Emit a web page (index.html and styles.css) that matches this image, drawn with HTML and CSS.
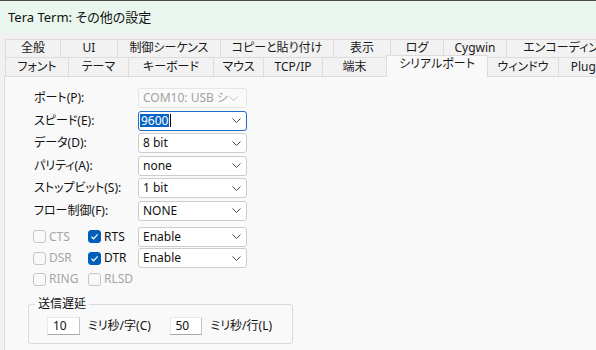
FILE: index.html
```html
<!DOCTYPE html>
<html lang="ja">
<head>
<meta charset="utf-8">
<title>Tera Term: その他の設定</title>
<link rel="stylesheet" href="styles.css">
</head>
<body>
<div class="window">
  <div class="titlebar">Tera Term: その他の設定</div>
  <div class="dialog">
    <div class="tabs">
      <div class="tab-row">
        <div class="tab w55">全般</div>
        <div class="tab w57">UI</div>
        <div class="tab w103">制御シーケンス</div>
        <div class="tab w113">コピーと貼り付け</div>
        <div class="tab w57">表示</div>
        <div class="tab w53">ログ</div>
        <div class="tab w63">Cygwin</div>
        <div class="tab w120">エンコーディング</div>
      </div>
      <div class="tab-row row2">
        <div class="tab w63">フォント</div>
        <div class="tab w60">テーマ</div>
        <div class="tab w85">キーボード</div>
        <div class="tab w50">マウス</div>
        <div class="tab w59">TCP/IP</div>
        <div class="tab w64">端末</div>
        <div class="tab w102 selected">シリアルポート</div>
        <div class="tab w70">ウィンドウ</div>
        <div class="tab w60">Plugin</div>
      </div>
    </div>
    <div class="panel">
      <div class="form">
        <label class="lbl">ポート(P):</label>
        <div class="combo disabled"><span class="val clip">COM10: USB シリアル デバイス</span><svg class="chev" width="9" height="5" viewBox="0 0 9 5"><polyline points="0.5,0.5 4.5,4.5 8.5,0.5" fill="none" stroke="#c4c4c4" stroke-width="1"/></svg></div>

        <label class="lbl">スピード(E):</label>
        <div class="combo focus"><span class="val"><span class="sel">9600</span><span class="caret"></span></span><svg class="chev" width="9" height="5" viewBox="0 0 9 5"><polyline points="0.5,0.5 4.5,4.5 8.5,0.5" fill="none" stroke="#444" stroke-width="1"/></svg></div>

        <label class="lbl">データ(D):</label>
        <div class="combo"><span class="val">8 bit</span><svg class="chev" width="9" height="5" viewBox="0 0 9 5"><polyline points="0.5,0.5 4.5,4.5 8.5,0.5" fill="none" stroke="#444" stroke-width="1"/></svg></div>

        <label class="lbl">パリティ(A):</label>
        <div class="combo"><span class="val">none</span><svg class="chev" width="9" height="5" viewBox="0 0 9 5"><polyline points="0.5,0.5 4.5,4.5 8.5,0.5" fill="none" stroke="#444" stroke-width="1"/></svg></div>

        <label class="lbl">ストップビット(S):</label>
        <div class="combo"><span class="val">1 bit</span><svg class="chev" width="9" height="5" viewBox="0 0 9 5"><polyline points="0.5,0.5 4.5,4.5 8.5,0.5" fill="none" stroke="#444" stroke-width="1"/></svg></div>

        <label class="lbl">フロー制御(F):</label>
        <div class="combo"><span class="val">NONE</span><svg class="chev" width="9" height="5" viewBox="0 0 9 5"><polyline points="0.5,0.5 4.5,4.5 8.5,0.5" fill="none" stroke="#444" stroke-width="1"/></svg></div>
      </div>

      <div class="checks">
        <div class="check-row">
          <div class="chk first"><span class="box"></span><span class="ctext off">CTS</span></div>
          <div class="chk second"><span class="box on"><svg width="13" height="13" viewBox="0 0 13 13"><polyline points="3.5,6.8 5.6,8.8 9.6,4.4" fill="none" stroke="#fff" stroke-width="1.2"/></svg></span><span class="ctext">RTS</span></div>
          <div class="combo"><span class="val">Enable</span><svg class="chev" width="9" height="5" viewBox="0 0 9 5"><polyline points="0.5,0.5 4.5,4.5 8.5,0.5" fill="none" stroke="#444" stroke-width="1"/></svg></div>
        </div>
        <div class="check-row">
          <div class="chk first"><span class="box"></span><span class="ctext off">DSR</span></div>
          <div class="chk second"><span class="box on"><svg width="13" height="13" viewBox="0 0 13 13"><polyline points="3.5,6.8 5.6,8.8 9.6,4.4" fill="none" stroke="#fff" stroke-width="1.2"/></svg></span><span class="ctext">DTR</span></div>
          <div class="combo"><span class="val">Enable</span><svg class="chev" width="9" height="5" viewBox="0 0 9 5"><polyline points="0.5,0.5 4.5,4.5 8.5,0.5" fill="none" stroke="#444" stroke-width="1"/></svg></div>
        </div>
        <div class="check-row">
          <div class="chk first"><span class="box"></span><span class="ctext off">RING</span></div>
          <div class="chk second"><span class="box"></span><span class="ctext off">RLSD</span></div>
        </div>
      </div>

      <fieldset class="group">
        <legend>送信遅延</legend>
        <div class="delay-row">
          <div class="num">10</div>
          <span class="unit">ミリ秒/字(C)</span>
          <div class="num">50</div>
          <span class="unit">ミリ秒/行(L)</span>
        </div>
      </fieldset>
    </div>
  </div>
</div>
</body>
</html>
```

FILE: styles.css
```css
* { box-sizing: border-box; }
html, body {
  margin: 0;
  padding: 0;
  width: 596px;
  height: 350px;
  overflow: hidden;
  background: #f0f0f0;
  font-family: "Noto Sans", "Noto Sans CJK JP", sans-serif;
  font-feature-settings: "palt";
  color: #1a1a1a;
}
.window {
  width: 596px;
  height: 350px;
  display: flex;
  flex-direction: column;
}
.titlebar {
  height: 33px;
  flex: none;
  background: #eaf7ee;
  border-top: 1px solid #4a4a4a;
  padding-left: 8px;
  display: flex;
  align-items: center;
  font-size: 13px;
  line-height: 16px;
  color: #111;
}
.dialog {
  flex: 1;
  background: #f0f0f0;
  padding: 6px 0 0 4px;
  display: flex;
  flex-direction: column;
}
.tabs {
  margin-left: 1px;
  display: flex;
  flex-direction: column;
}
.tab-row {
  display: flex;
  height: 18px;
  white-space: nowrap;
}
.tab-row.row2 {
  height: 19px;
  align-items: flex-end;
}
.tab {
  flex: none;
  height: 100%;
  border-top: 1px solid #dcdcdc;
  border-left: 1px solid #dcdcdc;
  background: #f2f2f2;
  font-size: 12px;
  line-height: 16px;
  text-align: center;
  overflow: hidden;
}
.row2 .tab { line-height: 17px; }
.tab.selected {
  position: relative;
  z-index: 1;
  height: 22px;
  margin-bottom: -1px;
  background: #f9f9f9;
  border-right: 1px solid #dcdcdc;
  line-height: 16px;
}
.tab.selected + .tab { border-left: none; }
.w50 { width: 50px; }
.w53 { width: 53px; }
.w55 { width: 55px; }
.w57 { width: 57px; }
.w59 { width: 59px; }
.w60 { width: 60px; }
.w63 { width: 63px; }
.w64 { width: 64px; }
.w70 { width: 70px; }
.w85 { width: 85px; }
.w102 { width: 102px; }
.w103 { width: 103px; }
.w113 { width: 113px; }
.w120 { width: 120px; }

.panel {
  flex: 1;
  background: #f9f9f9;
  border: 1px solid #dcdcdc;
  border-right: none;
  border-bottom: none;
  padding-top: 11px;
}
.form {
  display: grid;
  grid-template-columns: 104px 109px;
  grid-auto-rows: 20px;
  row-gap: 2.6px;
  padding-left: 29px;
  align-items: center;
}
.lbl {
  font-size: 12px;
  line-height: 16px;
  color: #111;
  white-space: nowrap;
}
.combo {
  width: 109px;
  height: 20px;
  background: #fff;
  border: 1px solid #cccccc;
  border-radius: 3px;
  display: flex;
  align-items: center;
  padding: 0 5px 0 4px;
  font-size: 12px;
  line-height: 16px;
  color: #111;
}
.combo .val {
  flex: 1;
  white-space: nowrap;
  display: flex;
  align-items: center;
}
.combo .val.clip {
  overflow: hidden;
  max-width: 86px;
  display: block;
}
.combo .chev { flex: none; }
.combo.disabled {
  background: #fafafa;
  border-color: #e6e6e6;
  color: #a2a2a2;
}
.combo.focus {
  border-color: #1a6fc4;
  padding-left: 1px;
}
.sel {
  background: #0a64c8;
  color: #fff;
  padding: 0 1px 0 1px;
  line-height: 13px;
}
.caret {
  width: 1px;
  height: 13px;
  background: #000;
  margin-left: 1px;
}

.checks {
  margin-top: 6px;
  padding-left: 28px;
  display: flex;
  flex-direction: column;
  gap: 1.2px;
}
.check-row {
  display: flex;
  align-items: center;
  height: 20px;
}
.chk {
  display: flex;
  align-items: center;
  gap: 3px;
  flex: none;
}
.chk.first { width: 55px; }
.chk.second { width: 50px; }
.box {
  width: 13px;
  height: 13px;
  border: 1px solid #c6c6c6;
  border-radius: 3px;
  background: #f9f9f9;
  flex: none;
  display: block;
}
.box.on {
  background: #005fb8;
  border-color: #005fb8;
  position: relative;
}
.box.on svg {
  display: block;
  margin: -1px;
}
.ctext {
  font-size: 12px;
  line-height: 16px;
  color: #111;
}
.ctext.off { color: #a6a6a6; }

.group {
  margin: 8px 0 0 23px;
  width: 265px;
  padding: 0 0 8px 18px;
  border: 1px solid #dcdcdc;
  border-radius: 3px;
  min-inline-size: 0;
}
.group legend {
  padding: 0 3px;
  margin-left: -12px;
  font-size: 12px;
  line-height: 14px;
  color: #111;
}
.delay-row {
  display: flex;
  align-items: center;
  padding-top: 6px;
}
.num {
  width: 33px;
  height: 18px;
  background: #fff;
  border: 1px solid #e8e8e8;
  border-right-color: #c4c4c4;
  border-bottom-color: #a8a8a8;
  font-size: 12px;
  line-height: 16px;
  padding-left: 5px;
  color: #111;
}
.unit {
  width: 90px;
  padding-left: 8px;
  font-size: 12px;
  line-height: 16px;
  color: #111;
  white-space: nowrap;
}
```
